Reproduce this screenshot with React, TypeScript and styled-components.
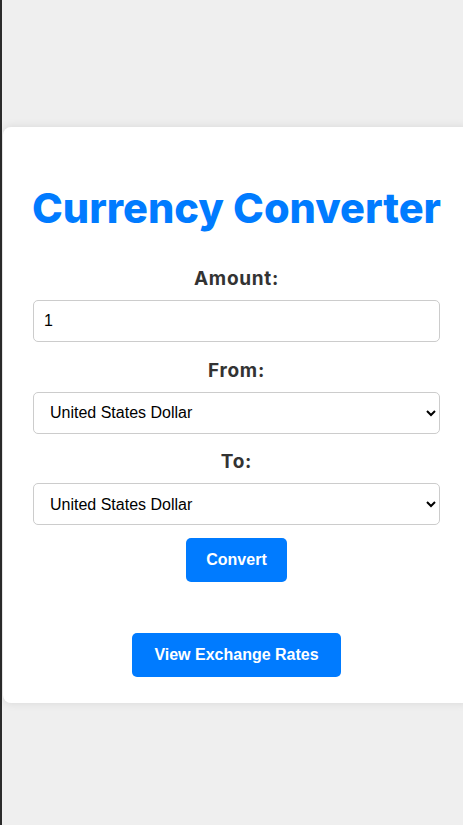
import styled, {createGlobalStyle} from "styled-components";

const GlobalStyle = createGlobalStyle`
    html, body {
        margin: 0;
        padding: 0;
        overflow: hidden;
    }
    body {
        background-color: #efefef;
        font-family: "Liberation Sans", Arial, sans-serif;
    }
`

const PageWrapper = styled.div`
    display: flex;
    min-height: 825px;
    border-left: 2px solid #2b2b2b;
    padding-top: 127px;
    box-sizing: border-box;
`

const CardWrapper = styled.div`
    flex: 0 0 auto;
    width: 467px;
    margin-left: 1px;
    height: 576px;
    box-sizing: border-box;
    background-color: #ffffff;
    border-radius: 8px;
    box-shadow: 0 0 10px rgba(0, 0, 0, 0.1);
    padding: 0 30px;
    display: flex;
    flex-direction: column;
    align-items: center;
`

const Title = styled.h1`
    margin: 56px 0 0 0;
    font-family: Inter, "Open Sans", sans-serif;
    font-weight: 800;
    font-size: 41.5px;
    line-height: 50px;
    color: #007bff;
    white-space: nowrap;
`

const Label = styled.label`
    display: block;
    margin: ${p => p.$first ? "35px" : "17.5px"} 0 10px 0;
    font-family: Inter, "Open Sans", sans-serif;
    font-weight: 700;
    font-size: 19px;
    letter-spacing: 0.7px;
    line-height: 22px;
    color: #333333;
`

const fieldStyles = `
    width: 100%;
    height: 42px;
    box-sizing: border-box;
    border: 1px solid #cccccc;
    border-radius: 5px;
    padding: 0 10px;
    font-family: "Liberation Sans", Arial, sans-serif;
    font-size: 16px;
    color: #000000;
    background-color: #ffffff;
`

const AmountInput = styled.input`
    ${fieldStyles}
    outline: none;
`

const CurrencySelect = styled.select`
    ${fieldStyles}
    padding: 0 6px 0 12px;
`

const ActionButton = styled.button`
    margin-top: ${p => p.$gap}px;
    height: 44px;
    padding: 0 ${p => p.$pad ?? 20}px;
    border: none;
    border-radius: 5px;
    background-color: #007bff;
    color: #ffffff;
    font-family: "Liberation Sans", Arial, sans-serif;
    font-weight: 700;
    font-size: 16px;
    cursor: pointer;
`

const currencies = [
    "United States Dollar",
    "Euro",
    "British Pound",
    "Japanese Yen",
    "Indian Rupee",
]

function App() {
    return (
        <>
            <GlobalStyle/>
            <PageWrapper>
                <CardWrapper>
                    <Title>Currency Converter</Title>
                    <Label $first htmlFor="amount">Amount:</Label>
                    <AmountInput id="amount" type="text" defaultValue="1"/>
                    <Label htmlFor="from">From:</Label>
                    <CurrencySelect id="from" defaultValue="United States Dollar">
                        {currencies.map(c => <option key={c}>{c}</option>)}
                    </CurrencySelect>
                    <Label htmlFor="to">To:</Label>
                    <CurrencySelect id="to" defaultValue="United States Dollar">
                        {currencies.map(c => <option key={c}>{c}</option>)}
                    </CurrencySelect>
                    <ActionButton $gap={13}>Convert</ActionButton>
                    <ActionButton $gap={51} $pad={22}>View Exchange Rates</ActionButton>
                </CardWrapper>
            </PageWrapper>
        </>
    )
}

export default App;
